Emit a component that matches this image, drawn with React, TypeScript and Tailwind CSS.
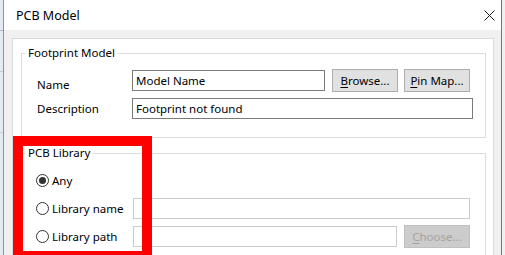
import React from "react";

const font = { fontFamily: '"Noto Sans", "Open Sans", sans-serif' };

function Btn({ u, rest, disabled }: { u: string; rest: string; disabled?: boolean }) {
  return (
    <button
      className={
        disabled
          ? "w-[66px] h-[23px] border border-[#bfbfbf] bg-[#cccccc] text-[#a3a3a3] text-[11.5px] leading-[16px] flex items-center justify-center"
          : "w-[66px] h-[23px] border border-[#adadad] bg-[#e1e1e1] text-black text-[11.5px] leading-[16px] flex items-center justify-center"
      }
    >
      <span className="underline underline-offset-[2px]">{u}</span>
      <span>{rest}</span>
    </button>
  );
}

function Radio({ checked, label }: { checked?: boolean; label: string }) {
  return (
    <div className="w-[111px] flex items-center pl-[14px]">
      <span className="w-[13px] h-[13px] rounded-full border border-[#333333] bg-white flex items-center justify-center">
        {checked && <span className="w-[7px] h-[7px] rounded-full bg-[#333333]" />}
      </span>
      <span className="ml-[3px] text-[11.5px] leading-[16px]">{label}</span>
    </div>
  );
}

export default function App() {
  return (
    <div className="w-[505px] h-[255px] overflow-hidden relative flex bg-[#f0f0f0] text-black" style={font}>
      {/* background window strip */}
      <div className="w-[3px] h-full bg-[#e4eaf1] flex flex-col">
        <div className="h-[30px]" />
        <div className="h-px bg-[#a9b6c4]" />
        <div className="h-[40px]" />
        <div className="h-px bg-[#c5ced8]" />
        <div className="h-[60px]" />
        <div className="h-px bg-[#c5ced8]" />
      </div>
      {/* dialog window */}
      <div className="w-[499px] h-full flex flex-col border-l border-r border-l-[#7f97b3] border-r-[#3c7fcf] bg-[#f0f0f0]">
        <div className="h-[30px] bg-white flex items-center justify-between pl-[12px] pr-[6px] shrink-0">
          <span className="text-[12.5px] leading-[16px] pt-[1px]">PCB Model</span>
          <svg width="11" height="11" viewBox="0 0 11 11" className="mr-[0px]">
            <path d="M0.5 0.5 L10.5 10.5 M10.5 0.5 L0.5 10.5" stroke="#1a1a1a" strokeWidth="1" />
          </svg>
        </div>
        <div className="flex-1 pl-[8px] pr-[7px] pt-[8px]">
          <div className="bg-white border border-[#d9d9d9] pl-[8px] pr-[7px] pt-[6px] h-[300px]">
            {/* Footprint Model */}
            <fieldset className="border border-[#dcdcdc] pb-[18px]">
              <legend className="ml-[3px] px-[3px] text-[11.5px] leading-[16px]">Footprint Model</legend>
              <div className="flex items-start mt-[8px] h-[23px]">
                <span className="w-[95px] ml-[15px] pt-[8px] text-[11.5px] leading-[16px]">Name</span>
                <input
                  readOnly
                  value="Model Name"
                  className="mt-[1px] w-[193px] h-[21px] border border-[#7a7a7a] px-[3px] text-[11.5px] outline-none"
                />
                <div className="ml-[7px]">
                  <Btn u="B" rest="rowse..." />
                </div>
                <div className="ml-[6px]">
                  <Btn u="P" rest="in Map..." />
                </div>
              </div>
              <div className="flex items-center mt-[6px] h-[21px]">
                <span className="w-[95px] ml-[15px] text-[11.5px] leading-[16px]">Description</span>
                <input
                  readOnly
                  value="Footprint not found"
                  className="w-[341px] h-[21px] border border-[#7a7a7a] px-[3px] text-[11.5px] outline-none"
                />
              </div>
            </fieldset>
            {/* PCB Library */}
            <fieldset className="border border-[#dcdcdc] mt-[7px] pb-[20px]">
              <legend className="ml-[3px] px-[3px] text-[11.5px] leading-[16px]">PCB Library</legend>
              <div className="flex items-center mt-[9px] h-[21px]">
                <Radio checked label="Any" />
              </div>
              <div className="flex items-center mt-[7px] h-[21px]">
                <Radio label="Library name" />
                <input readOnly value="" className="w-[337px] h-[21px] border border-[#cccccc] bg-white outline-none" />
              </div>
              <div className="flex items-center mt-[6px] h-[23px]">
                <Radio label="Library path" />
                <input readOnly value="" className="w-[264px] h-[21px] border border-[#cccccc] bg-white outline-none" />
                <div className="ml-[7px]">
                  <Btn u="C" rest="hoose..." disabled />
                </div>
              </div>
            </fieldset>
          </div>
        </div>
      </div>
      <div className="flex-1 bg-[#f0f0f0]" />
      {/* red annotation box */}
      <div className="absolute left-[13px] top-[136px] w-[139px] h-[125px] border-[10px] border-[#ff0000]" />
    </div>
  );
}
